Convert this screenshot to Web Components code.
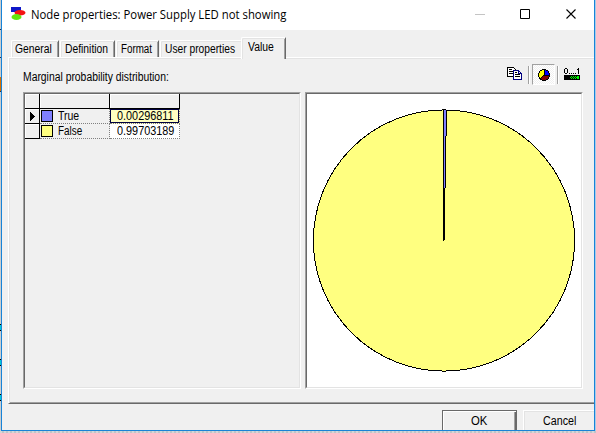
<!DOCTYPE html>
<html lang="en"><head><meta charset="utf-8"><title>Node properties</title>
<style>
body{margin:0;width:596px;height:433px;overflow:hidden;background:#c9cdd0;font:12px/14px "Liberation Sans",sans-serif;color:#000}
</style></head><body>
<script>
const define=(name,html,init)=>customElements.define(name,class extends HTMLElement{
  constructor(){super();this.attachShadow({mode:'open'}).innerHTML=html;}
  connectedCallback(){if(init)init.call(this,this.shadowRoot);}
});

/* Label whose glyphs are condensed to the width given by w */
define('fit-text','<style>:host{display:block;white-space:nowrap;flex:none}span{display:inline-block;transform-origin:0 50%}</style><span><slot></slot></span>',function(r){
  const w=+this.getAttribute('w');this.style.width=w+'px';
  const s=r.querySelector('span');
  requestAnimationFrame(()=>{s.style.transform=`scaleX(${w/s.offsetWidth})`;});
  s.style.transform=`scaleX(${w/s.offsetWidth})`;
});

define('title-bar',`<style>
:host{display:flex;height:30px;background:#fff;font-family:"Open Sans","Noto Sans",sans-serif;font-size:12px;line-height:16px}
svg{display:block;flex:none}.app{margin:6px 5px 0 8px}fit-text{margin-top:7px}.ctl{margin:0 0 0 auto}
</style>
<svg class="app" width="16" height="16"><path fill="#1018c8" d="M1 1h10v5H1z"/><ellipse cx="10" cy="6.800" rx="5.500" ry="2.800" fill="#f41414"/><ellipse cx="6.500" cy="11" rx="5" ry="3" fill="#63e80c"/></svg>
<fit-text w="255"><slot></slot></fit-text>
<svg class="ctl" width="119" height="30"><path d="M0 14.5h10" stroke="#c4c4c4"/><path d="M45.5 9.5h9v9h-9z" fill="none" stroke="#000"/><path d="M91.5 9.5l9 9m0-9l-9 9" stroke="#000" stroke-width="1.1"/></svg>`);

define('tab-item',`<style>
:host{display:block;box-sizing:border-box;height:17px;padding:1px 0 0 3px;border-top:1px solid #fff;border-left:1px solid #fff;border-right:1px solid #696969;box-shadow:inset 1px 1px #e3e3e3,inset -1px 0 #a0a0a0;border-radius:2px 1px 0 0}
:host([before-active]){border-right:0;box-shadow:inset 1px 1px #e3e3e3}
:host([active]){height:22px;margin-bottom:-2px;background:#f0f0f0;padding:2px 0 0 6px;position:relative}
</style><slot></slot>`);

define('tab-strip',`<style>:host{display:flex;align-items:flex-end;height:27px;padding-left:9px;box-sizing:border-box}</style><slot></slot>`);

define('tool-bar',`<style>
:host{display:flex;height:22px}
i{width:1px;height:18px;margin-top:2px;background:#a0a0a0;border-right:1px solid #fff}
.b{box-sizing:border-box;width:23px;height:21px;border:1px solid;border-color:#a0a0a0 #fff #fff #a0a0a0;background:conic-gradient(#fff 25%,#f0f0f0 0 50%,#fff 0 75%,#f0f0f0 0) 0 0/2px 2px}
svg{display:block;shape-rendering:crispEdges}
</style>
<svg width="21" height="20"><path d="M.5 3.5h6l2 2v7h-8z" fill="#fff" stroke="#000"/><path d="M2 5.5h3M2 7.5h5M2 9.5h5" stroke="#000"/><path d="M6.500 6.500h5l3 3v6h-8z" fill="#fff" stroke="#000080"/><path d="M11.500 6v3.500h3" stroke="#000080" fill="none"/><path d="M8 8.500h2M8 10.500h5M8 12.500h5" stroke="#000"/></svg>
<i></i><div class="b" style="margin:0 2px"><svg width="21" height="19"><circle cx="11" cy="10" r="5.500" fill="#ff0"/><path d="M11 10V4.500A5.500 5.500 0 0 1 16.500 10z" fill="#00f"/><path d="M11 10h5.500a5.500 5.500 0 0 1-9.400 3.900z" fill="#800000"/><path d="M11 4.500V10h5.500M11 10l-4 4" stroke="#000" fill="none"/><circle cx="11" cy="10" r="5.500" fill="none" stroke="#000"/></svg></div><i></i>
<svg width="17" height="20" style="margin-left:5px"><path d="M.5 5v4M3.500 5v4M1 4.500h2M1 9.500h2M14.500 4v6M13 5.500h1M5 9.500h1m1 0h1m1 0h1m1 0h1" stroke="#000"/><path d="M0 11h16v5H0z"/><path d="M7 12.500h1m1 0h1m1 0h1m1 0h2M6 13.500h1m1 0h1m1 0h1m1 0h3M7 14.500h1m1 0h1m1 0h1m1 0h2" stroke="#0f0"/></svg>`);

define('sunken-pane',`<style>:host{display:block;box-sizing:border-box;width:278px;height:297px;border:1px solid;border-color:#a0a0a0 #fff #fff #a0a0a0}
div{box-sizing:border-box;height:100%;border:1px solid;border-color:#696969 #e3e3e3 #e3e3e3 #696969}</style><div><slot></slot></div>`);

define('state-grid',`<style>
:host{display:grid;grid-template-columns:15px 70px 70px;grid-template-rows:15px 15px 15px;width:155px}
div{box-sizing:border-box;display:flex}
.h{border-right:1px solid #000;border-bottom:1px solid #000;box-shadow:inset 1px 1px #fff}
.d{border-right:1px dotted #808080;border-bottom:1px dotted #808080}
.n{padding:1px 0 0 1px;gap:5px}.v{padding-left:7px;background:#fff}
.sel{box-shadow:inset 0 0 0 1px #000040;background:#ffffc0}
b{box-sizing:border-box;width:12px;height:12px;border:1px solid #000}
.n fit-text{margin-top:-1px}
</style>
<div class="h"></div><div class="h"></div><div class="h"></div>
<div class="h"><svg width="14" height="14" shape-rendering="crispEdges"><path d="M5 3l5 4.500L5 12z"/></svg></div>
<div class="n d"><b style="background:#8080ff"></b><fit-text w="21">True</fit-text></div><div class="v d sel"><fit-text w="57">0.00296811</fit-text></div>
<div class="h"></div><div class="n d"><b style="background:#ffff80"></b><fit-text w="24">False</fit-text></div><div class="v d"><fit-text w="57">0.99703189</fit-text></div>`);

define('pie-chart',`<style>:host{display:block;height:100%;background:#fff}svg{display:block;shape-rendering:crispEdges}</style>
<svg width="274" height="293"><circle cx="137" cy="146.500" r="130.600" fill="#ffff80" stroke="#000"/><path d="M136 16h3v26h-1v52h-2z" fill="#8080ff"/><path d="M136 16h1v131h-1zM139 16h1v26h-1zM138 42h1v52h-1zM137 94h1v52h-1z"/></svg>`);

define('push-button',`<style>
:host{display:block;box-sizing:border-box;height:20px;width:71px;padding:3px 0 0 19px;border:solid #fff;border-width:1px 0 0 1px;box-shadow:inset 1px 1px #e3e3e3}
:host([default]){width:75px;padding:3px 0 0 28px;border:1px solid #696969;border-bottom:0;box-shadow:inset 1px 1px #fff,inset -1px 0 #696969,inset -2px 0 #a0a0a0}
</style><slot></slot>`);

define('node-dialog',`<style>
:host{display:grid;grid-template-columns:1px 594px 1px;grid-template-rows:431px 2px}
.l{background:linear-gradient(#0000 29px,#203050 29px 30px,#0000 30px 57px,#203050 57px 58px,#0000 58px 77px,#d97000 77px 91px,#203050 91px 92px,#0000 92px 324px,#000 324px 325px,#00c8d8 325px 330px,#000 330px 331px,#0000 331px 359px,#000 359px 360px,#00c8d8 360px 365px,#000 365px 366px,#0000 366px 394px,#000 394px 395px,#00c8d8 395px 400px,#000 400px 401px,#0000 401px)}
.r{background:#a9cbe8}.bot{grid-column:1/4;background:repeating-linear-gradient(90deg,#d6d6d6 0 2px,#c0c4c8 2px 4px)}
.win{box-sizing:border-box;border:solid #1883d7;border-width:0 1px 1px;background:#f0f0f0;overflow:hidden}
.page{box-sizing:border-box;height:347px;margin-left:6px;border-top:1px solid #fff;border-left:1px solid #fff;border-bottom:1px solid #696969;box-shadow:inset 1px 1px #e3e3e3,inset 0 -1px #a0a0a0;padding-left:14px}
.top{display:flex;height:34px;box-sizing:border-box;padding-top:6px}
.top fit-text{margin-top:6px}.top tool-bar{margin-left:338px}
.panes{display:flex;gap:4px}.foot{display:flex;gap:6px;padding:6px 0 0 440px}
</style>
<div class="l"></div><div class="win"><title-bar>Node properties: Power Supply LED not showing</title-bar>
<tab-strip>
<tab-item style="width:48px"><fit-text w="37">General</fit-text></tab-item>
<tab-item style="width:55px;margin-left:1px;padding-left:4px"><fit-text w="43">Definition</fit-text></tab-item>
<tab-item style="width:43px;margin-left:1px;padding-left:4px"><fit-text w="31">Format</fit-text></tab-item>
<tab-item before-active style="width:81px;margin-left:1px;padding-left:4px"><fit-text w="70">User properties</fit-text></tab-item>
<tab-item active style="width:45px"><fit-text w="26">Value</fit-text></tab-item>
</tab-strip>
<div class="page"><div class="top"><fit-text w="146">Marginal probability distribution:</fit-text><tool-bar></tool-bar></div>
<div class="panes"><sunken-pane><state-grid></state-grid></sunken-pane><sunken-pane><pie-chart></pie-chart></sunken-pane></div></div>
<div class="foot"><push-button default><fit-text w="16">OK</fit-text></push-button><push-button><fit-text w="33">Cancel</fit-text></push-button></div>
</div><div class="r"></div><div class="bot"></div>`);
document.querySelector('body').append(document.createElement('node-dialog'));
</script></body></html>
